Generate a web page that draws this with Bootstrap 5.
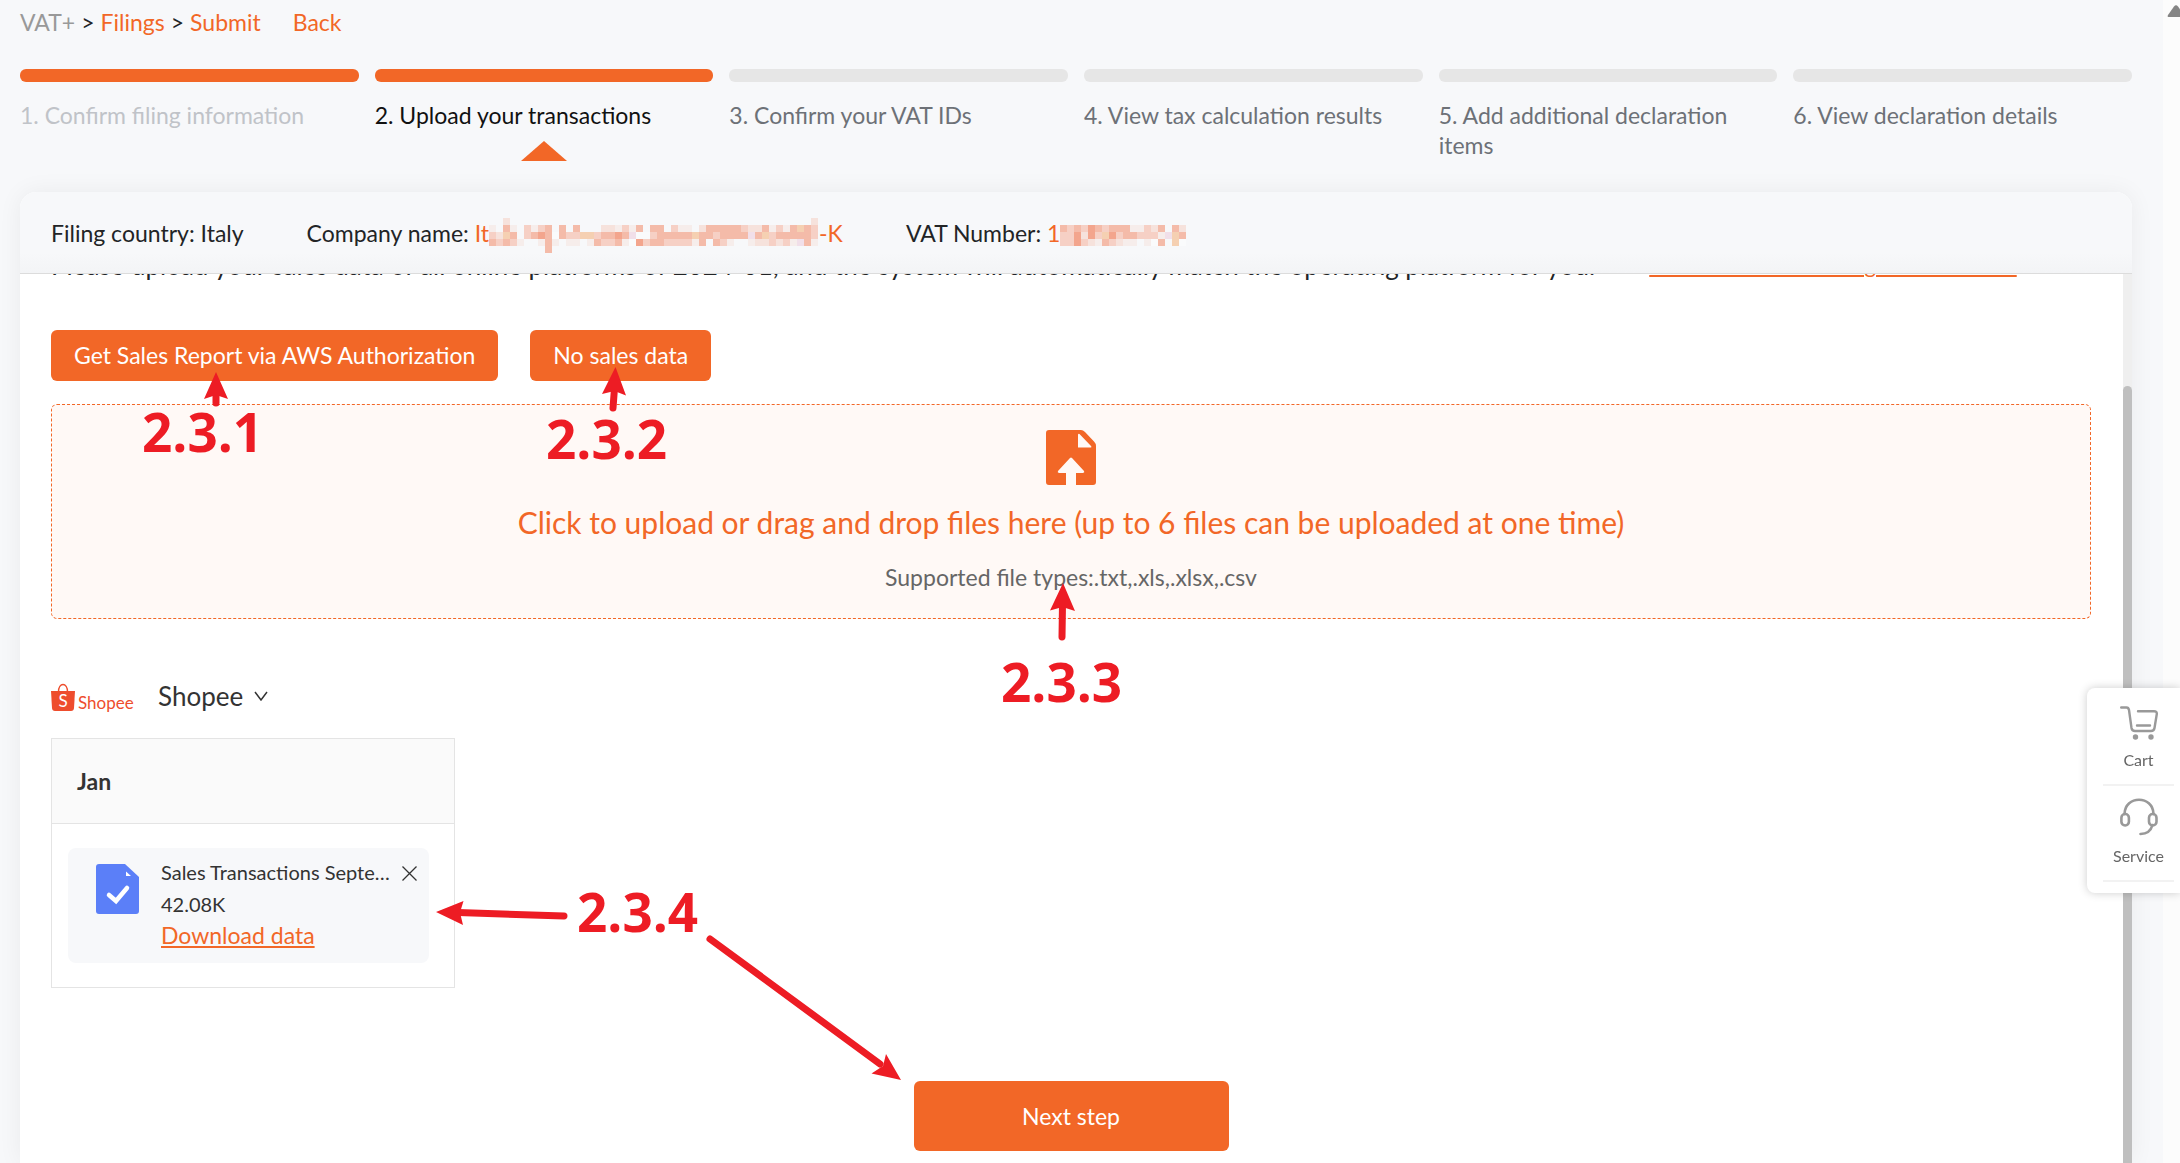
<!DOCTYPE html>
<html lang="en">
<head>
<meta charset="utf-8">
<meta name="viewport" content="width=device-width, initial-scale=1">
<title>VAT+ Filings - Upload your transactions</title>
<link rel="stylesheet" href="https://cdn.jsdelivr.net/npm/bootstrap@5.3.0/dist/css/bootstrap.min.css">
<style>
:root{--brand:#f26727;--ink:#222426;--page:#f7f8fa}
body{font-family:Lato,"Liberation Sans",sans-serif;font-size:23px;line-height:30px;color:var(--ink);background:var(--page)}
a,a:hover{color:var(--brand)}
.app-shell{height:100vh;min-height:700px;overflow:hidden}
.app-main{padding:7px 31px 0 20px}
.page-rail{width:17px;background:#fcfcfc;overflow:hidden;padding:5px 0 0 4px}
.crumb-root{color:#999}
.back-link{margin-left:26px}
.crumbs{gap:6px;font-size:23px;line-height:30px}
.steps{gap:16px;margin-top:32px;min-height:123px}
.step{flex:1 1 0;min-width:0;color:#6d7177}
.step-bar{height:13px;border-radius:6px;background:#e6e6e6;margin-bottom:18px}
.step.done{color:#c0c3c8}
.step.current{color:#111}
.step.done .step-bar,.step.current .step-bar{background:var(--brand)}
.step-pointer{position:absolute;left:50%;top:72px;margin-left:-23px}
.panel{border-radius:16px 16px 0 0;box-shadow:0 0 24px rgba(0,0,0,.06);background:#fff;min-height:0}
.panel-head{padding:26px 31px 25px;gap:8px 63px;background:linear-gradient(#f7f8fa 75%,#f3f4f6);border-bottom:1px solid #dcdcdc;border-radius:16px 16px 0 0}
.accent{color:var(--brand)}
.masked{display:block;overflow:visible}
.panel-body{padding:0 32px 0 31px;min-height:0;overflow:hidden}
.intro{font-size:26px;line-height:32px;margin-top:-25px;margin-bottom:49px;gap:54px;white-space:nowrap}
.intro a{font-size:22px;text-decoration-thickness:2px;text-underline-offset:2px}
.btn-brand,.btn-brand:hover{background:var(--brand);color:#fff;border:0;border-radius:6px;font-size:23px;line-height:30px;padding:10px 23px 11px}
.actions{gap:32px;margin-bottom:23px}
.dropzone{border:1px dashed var(--brand);border-radius:6px;background:#fff9f6;color:var(--brand);height:215px;padding-top:25px}
.drop-title{font-size:30px;line-height:40px;margin-top:16px;font-weight:400}
.drop-hint{color:#666;margin-top:20px}
.platform{margin-top:61px;gap:23px;height:34px}
.platform-btn{border:0;background:none;padding:0;font-size:26px;line-height:32px;color:#333;gap:11px}
.month{width:404px;margin-top:24px;border:1px solid #e4e4e4;color:#333}
.month-head{background:#fafafa;border-bottom:1px solid #e4e4e4;padding:27px 25px;font-size:23px;line-height:30px;margin:0;font-weight:700}
.month-body{padding:24px 25px 24px 16px}
.file-box{background:var(--page);border-radius:8px;padding:8px 12px 10px 28px;gap:22px;height:115px}
.file-icon{margin-top:8px}
.file-name{font-size:20px;line-height:32px;white-space:nowrap}
.file-meta{min-width:0}
.close-btn{border:0;background:none;padding:0;line-height:0;margin:10px 0 0 -22px}
.btn-next,.btn-next:hover{width:315px;padding:20px;margin-top:93px}
.inner-rail{width:9px;flex:none;background:#efefef;padding-top:112px}
.inner-thumb{background:#bfbfbf;border-radius:5px 5px 0 0;height:100%}
.side-dock{position:fixed;right:0;top:688px;width:93px;height:205px;background:#fff;border-radius:8px 0 0 8px;box-shadow:0 0 10px rgba(0,0,0,.2);padding:18px 6px 0 16px}
.dock-item{border:0;border-bottom:2px solid #f2f2f2;background:none;padding:0;width:100%;color:#666;font-size:16px;line-height:20px;height:80px;display:flex;flex-direction:column;align-items:center;gap:10px;margin-bottom:12px}
.dock-item + .dock-item{height:84px}
.callouts{position:absolute;left:0;top:0;pointer-events:none;font:bold 53px "Open Sans","Noto Sans",sans-serif;fill:#ed1c24}
</style>
<script src="https://cdn.jsdelivr.net/npm/bootstrap@5.3.0/dist/js/bootstrap.bundle.min.js"></script>
</head>
<body>
<div class="app-shell d-flex position-relative">
  <main class="app-main flex-grow-1 d-flex flex-column overflow-hidden">
    <nav class="crumbs d-flex" aria-label="Breadcrumb">
      <span class="crumb-root">VAT+</span><span>&gt;</span>
      <a class="text-decoration-none" href="#">Filings</a><span>&gt;</span>
      <a class="text-decoration-none" href="#">Submit</a>
      <a class="text-decoration-none back-link" href="#">Back</a>
    </nav>

    <div class="steps d-flex flex-shrink-0">
      <div class="step done"><div class="step-bar"></div>1. Confirm filing information</div>
      <div class="step current position-relative"><div class="step-bar"></div>2. Upload your transactions
        <svg class="step-pointer" width="46" height="20" viewBox="0 0 46 20" aria-hidden="true"><path d="M23 0 46 20H0z" fill="#f26727"/></svg>
      </div>
      <div class="step"><div class="step-bar"></div>3. Confirm your VAT IDs</div>
      <div class="step"><div class="step-bar"></div>4. View tax calculation results</div>
      <div class="step"><div class="step-bar"></div>5. Add additional declaration items</div>
      <div class="step"><div class="step-bar"></div>6. View declaration details</div>
    </div>

    <section class="panel flex-grow-1 d-flex flex-column">
      <header class="panel-head d-flex flex-wrap flex-shrink-0">
        <div>Filing country: Italy</div>
        <div class="d-flex">Company name:&nbsp;<span class="accent d-flex">It<svg class="masked" id="maskCompany" width="330" height="30" aria-label="hidden"></svg>-K</span></div>
        <div class="d-flex">VAT Number:&nbsp;<span class="accent d-flex">1<svg class="masked" id="maskVat" width="133" height="30" aria-label="hidden"></svg></span></div>
      </header>
      <div class="d-flex flex-grow-1 overflow-hidden">
        <div class="panel-body flex-grow-1">
          <div class="intro d-flex">
            <span>Please upload your sales data of all online platforms of 2024-01, and the system will automatically match the operating platform for you.</span>
            <a href="#">How to download the guide for sellers</a>
          </div>
          <div class="actions d-flex">
            <button class="btn btn-brand" type="button">Get Sales Report via AWS Authorization</button>
            <button class="btn btn-brand" type="button">No sales data</button>
          </div>
          <div class="dropzone text-center" role="button" tabindex="0">
            <svg class="d-block mx-auto" width="50" height="56" viewBox="0 0 50 56" aria-hidden="true"><path fill="#f26727" fill-rule="evenodd" d="M3 0H35Q37 0 39 2L48 11.500Q50 13.500 50 16V52Q50 55 47 55H30V43H37Q39 42.500 38 41L26 28Q25 27 24 28L12 41Q11 42.500 13 43H20V55H3Q0 55 0 52V3Q0 0 3 0ZM32 4.500V17.500H45Q46 17 45 16L33.500 4Q32.500 3.500 32 4.500Z"/></svg>
            <h2 class="drop-title mb-0">Click to upload or drag and drop files here (up to 6 files can be uploaded at one time)</h2>
            <div class="drop-hint">Supported file types:.txt,.xls,.xlsx,.csv</div>
          </div>

          <div class="platform d-flex align-items-end">
            <svg width="84" height="32" viewBox="0 0 84 32" role="img" aria-label="Shopee">
              <path d="M7.500 10C7.500 0 16.500 0 16.500 10" fill="none" stroke="#ee4d2d" stroke-width="1.500"/>
              <path d="M0 9H24L23 26Q22.800 29 20 29H4Q1.200 29 1 26Z" fill="#ee4d2d"/>
              <text x="12" y="25" text-anchor="middle" font-size="17" fill="#fff">S</text>
              <text x="27" y="27" font-size="17" fill="#ee4d2d">Shopee</text>
            </svg>
            <button class="platform-btn d-flex align-items-center align-self-start" type="button">Shopee
              <svg width="14" height="10" viewBox="0 0 14 10" aria-hidden="true"><path d="M1 1 7 9 13 1" fill="none" stroke="#333" stroke-width="1.500"/></svg>
            </button>
          </div>

          <div class="month">
            <h3 class="month-head">Jan</h3>
            <div class="month-body">
              <div class="file-box d-flex align-items-start">
                <svg class="file-icon flex-shrink-0" width="43" height="50" viewBox="0 0 43 50" aria-hidden="true"><path fill="#5b7ff8" d="M3 0H29L43 13V47Q43 50 40 50H3Q0 50 0 47V3Q0 0 3 0Z"/><path d="M30 7.500V12H35Z" fill="#fff"/><path d="m13 31 7 6 11-13" fill="none" stroke="#fff" stroke-width="4.500" stroke-linecap="round"/></svg>
                <div class="file-meta flex-grow-1">
                  <div class="file-name">Sales Transactions Septe…</div>
                  <div class="file-name">42.08K</div>
                  <a class="d-block" href="#">Download data</a>
                </div>
                <button class="close-btn" type="button" aria-label="Remove file"><svg width="15" height="15" viewBox="0 0 15 15"><path d="M.5.5 14.500 14.500M14.500.5.5 14.500" stroke="#333" stroke-width="1.300"/></svg></button>
              </div>
            </div>
          </div>

          <div class="text-center"><button class="btn btn-brand btn-next" type="button">Next step</button></div>
        </div>
        <div class="inner-rail"><div class="inner-thumb"></div></div>
      </div>
    </section>
  </main>
  <div class="page-rail flex-shrink-0"><svg class="d-block" width="18" height="12" viewBox="0 0 18 12" aria-hidden="true"><path d="M1.500 12Q0 12 1 10L7 1.500Q9-1 11 1.500L17 10Q18 12 16.500 12Z" fill="#858585"/></svg></div>

  <aside class="side-dock">
    <button class="dock-item" type="button">
      <svg width="38" height="34" viewBox="0 0 38 34" fill="none" stroke="#999" stroke-width="2.400" stroke-linecap="round" stroke-linejoin="round" aria-hidden="true"><path d="M1.200 1.500H6.500Q8.500 1.500 9 4L11.500 22Q12 25 15 25H31Q34 25 34.500 22L36.800 8Q37 5.200 34 5.200H18M17 19.500H30"/><circle cx="15.500" cy="31" r="1.500" fill="#999"/><circle cx="31" cy="31" r="1.500" fill="#999"/></svg>
      Cart
    </button>
    <button class="dock-item" type="button">
      <svg width="38" height="38" viewBox="0 0 38 38" fill="none" stroke="#999" stroke-width="2.600" stroke-linecap="round" aria-hidden="true"><path d="M4.500 16C5-3 33-3 33.500 16M32.500 27Q30 36 20.500 36"/><rect x="1.400" y="16" width="7.500" height="11.500" rx="3.700"/><rect x="29" y="16" width="7.500" height="11.500" rx="3.700"/></svg>
      Service
    </button>
  </aside>

  <svg class="callouts" width="1300" height="1100" viewBox="0 0 1300 1100">
    <g stroke="#ed1c24" stroke-width="7" stroke-linecap="round">
      <path d="M216 390V403M614.500 388 613 408M1062.500 604 1062 637M458 912.500 564 916M880 1064 710 939"/>
    </g>
    <path d="M216 372 228 399 216 395 204 399ZM615.500 367 626 395.500 614.500 391 602 394ZM1063 583 1075 611 1062.500 607 1050 610.500ZM436 912 463.500 901 460 912.500 463 925ZM901 1080 886 1054 883 1066 871.500 1073.500Z"/>
    <text x="142" y="452">2.3.1</text>
    <text x="546" y="459">2.3.2</text>
    <text x="1001" y="702">2.3.3</text>
    <text x="577" y="932">2.3.4</text>
  </svg>
</div>
<script>
// Masked values: each letter is the tint of one 7px tile.
const tints={a:'#f4bba9',b:'#f6d0c5',c:'#f6e2dc',d:'#f6edeb',e:'#f3a58d',p:'#f1dfe9',w:'#fafbfc',y:'#f5d0b2'};
function drawMask(id,rows){
  const svg=document.getElementById(id);
  rows.forEach((row,y)=>[...row].forEach((k,x)=>{
    if(!tints[k])return;
    const r=document.createElementNS('http://www.w3.org/2000/svg','rect');
    r.setAttribute('x',x*7);r.setAttribute('y',y*7);
    r.setAttribute('width',7);r.setAttribute('height',7);
    r.setAttribute('fill',tints[k]);svg.append(r);
  }));
}
drawMask('maskCompany',[
  '..c...........................................c',
  'd.ad.bdba.a.a...ccdbda.aa.bdd.caaaaabccadbdayab',
  'bcya.baeawabbyybaaeapwwbaaaaayaabaaaapaybaaaaab',
  'ababd..dad.dd.dabbadwebaabbbbda.abd..dccbcbdpad',
  '........a......................................'
]);
drawMask('maskVat',[
  '',
  'ababeabaaaddbca.ac',
  'bbecebyebaabbbdpya',
  'bbebcdabcdd.dwa.yw'
]);
</script>
</body>
</html>
